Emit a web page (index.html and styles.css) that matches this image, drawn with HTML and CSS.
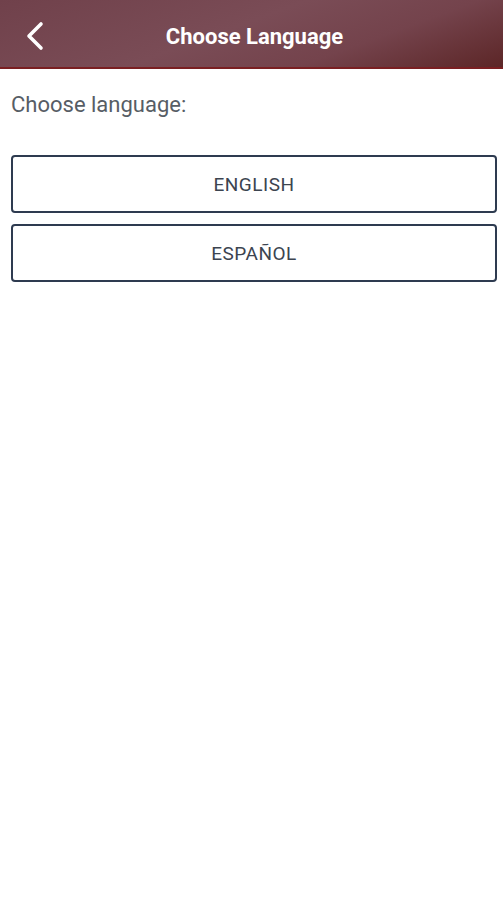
FILE: index.html
```html
<!DOCTYPE html>
<html lang="en">
<head>
  <meta charset="UTF-8">
  <meta name="viewport" content="width=device-width, initial-scale=1.0">
  <title>Choose Language</title>
  <link rel="stylesheet" href="styles.css">
</head>
<body>
  <header class="topbar">
    <a href="#" class="back" aria-label="Back">
      <svg width="20" height="30" viewBox="0 0 20 30">
        <path d="M16 3 L4 15 L16 27" fill="none" stroke="#fff" stroke-width="3.6" stroke-linecap="round" stroke-linejoin="round"/>
      </svg>
    </a>
    <h1>Choose Language</h1>
  </header>
  <main class="content">
    <p class="label">Choose language:</p>
    <div class="options">
      <button class="option">ENGLISH</button>
      <button class="option">ESPAÑOL</button>
    </div>
  </main>
</body>
</html>
```

FILE: styles.css
```css
body {
  margin: 0;
  font-family: Roboto, 'Noto Sans', sans-serif;
  background: #fff;
}
.topbar {
  position: relative;
  height: 67px;
  display: flex;
  align-items: center;
  justify-content: center;
  background: linear-gradient(160deg, #70414b 0%, #7a4c56 45%, #74434c 70%, #5c2627 100%);
  border-bottom: 2px solid #7a1f22;
}
.back {
  position: absolute;
  left: 25px;
  top: 21px;
  display: block;
  height: 30px;
}
.topbar h1 {
  margin: 0;
  color: #fff;
  font-size: 22px;
  font-weight: 700;
  padding: 5px 0 0 6px;
}
.content {
  padding: 0 6px 0 11px;
}
.label {
  margin: 22px 0 0;
  font-size: 22px;
  color: #575d65;
  line-height: 28px;
}
.options {
  display: flex;
  flex-direction: column;
  gap: 11px;
  margin-top: 36px;
}
.option {
  height: 58px;
  background: #fff;
  border: 2px solid #2e3b50;
  border-radius: 4px;
  font-family: Roboto, 'Noto Sans', sans-serif;
  font-size: 19px;
  color: #3c4450;
  letter-spacing: 0.5px;
}
```
